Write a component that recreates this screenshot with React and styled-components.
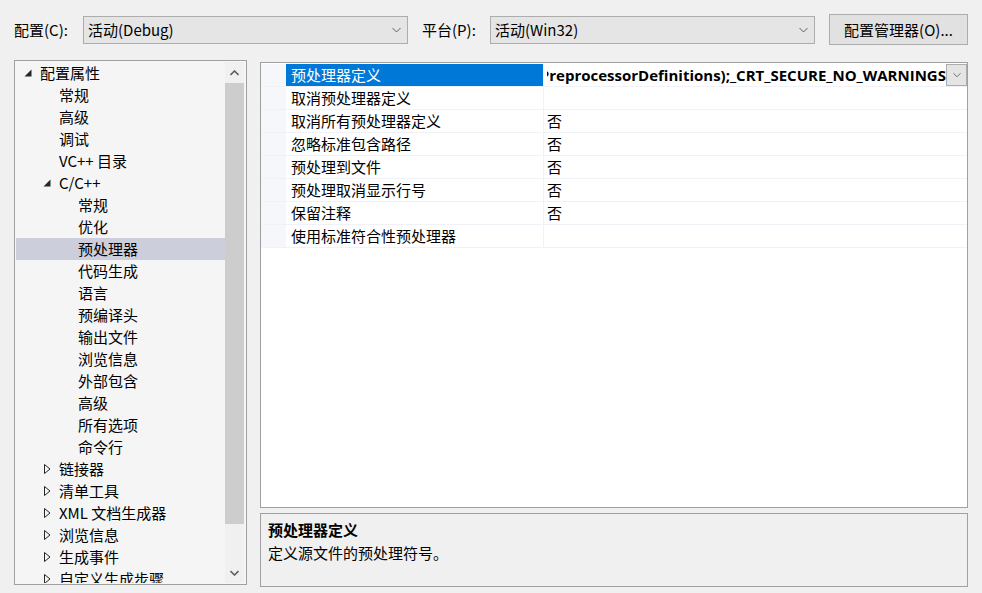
import React from 'react';
import styled, { createGlobalStyle } from 'styled-components';

const GlobalStyle = createGlobalStyle`
  html, body {
    margin: 0;
    padding: 0;
    background: #f0f0f0;
  }
  body {
    font-family: "Noto Sans CJK SC", "Noto Sans", sans-serif;
    font-size: 15px;
    color: #000;
  }
  * {
    box-sizing: border-box;
  }
`;

const Page = styled.div`
  width: 982px;
  height: 593px;
  padding: 14px 14px 0 14px;
  overflow: hidden;
  background: #f0f0f0;
`;

const TopBar = styled.div`
  display: flex;
  align-items: center;
  height: 31px;
`;

const Label = styled.div`
  width: ${(props) => props.width}px;
  margin-left: ${(props) => props.offset || 0}px;
  line-height: 20px;
  white-space: nowrap;
`;

const Combo = styled.div`
  display: flex;
  align-items: center;
  justify-content: space-between;
  width: 325px;
  height: 28px;
  padding: 0 6px 0 4px;
  background: #e5e5e5;
  border: 1px solid #adadad;
  line-height: 20px;
`;

const Button = styled.div`
  display: flex;
  align-items: center;
  justify-content: center;
  width: 139px;
  height: 31px;
  margin-left: 14px;
  background: #e1e1e1;
  border: 1px solid #adadad;
  line-height: 20px;
`;

const Main = styled.div`
  display: flex;
  margin-top: 15px;
  gap: 13px;
`;

const Tree = styled.div`
  display: flex;
  width: 233px;
  height: 525px;
  padding: 1px 2px 1px 1px;
  background: #f5f5f5;
  border: 1px solid #a0a0a0;
`;

const TreeList = styled.div`
  flex: 1;
  overflow: hidden;
`;

const TreeRow = styled.div`
  display: flex;
  align-items: center;
  height: 22px;
  padding-left: ${(props) => 8 + props.level * 19}px;
  background: ${(props) => (props.selected ? '#cccedb' : 'transparent')};
  white-space: nowrap;
  line-height: 20px;
`;

const Expander = styled.span`
  display: flex;
  align-items: center;
  width: 16px;
  height: 22px;
  flex-shrink: 0;
`;

const ScrollBar = styled.div`
  display: flex;
  flex-direction: column;
  width: 19px;
  background: #f0f0f0;
`;

const ScrollArrow = styled.div`
  display: flex;
  align-items: center;
  justify-content: center;
  height: 21px;
`;

const ScrollThumb = styled.div`
  height: 441px;
  background: #cdcdcd;
`;

const ScrollTrack = styled.div`
  flex: 1;
`;

const RightColumn = styled.div`
  display: flex;
  flex-direction: column;
  gap: 5px;
  width: 708px;
  margin-top: 2px;
`;

const Grid = styled.div`
  height: 446px;
  padding-top: 1px;
  background: #fff;
  border: 1px solid #a0a0a0;
`;

const GridRow = styled.div`
  display: flex;
  height: 23px;
  border-bottom: 1px solid #f0f2f8;
`;

const Gutter = styled.div`
  width: 25px;
  background: #f5f7fb;
`;

const NameCell = styled.div`
  display: flex;
  align-items: center;
  width: 258px;
  padding-left: 5px;
  border-right: 1px solid #f0f2f8;
  background: ${(props) => (props.selected ? '#0078d7' : '#fff')};
  color: ${(props) => (props.selected ? '#fff' : '#000')};
  white-space: nowrap;
  line-height: 20px;
`;

const ValueCell = styled.div`
  display: flex;
  align-items: center;
  flex: 1;
  min-width: 0;
  padding-left: 3px;
  line-height: 20px;
`;

const EditValue = styled.div`
  display: flex;
  justify-content: flex-end;
  flex: 1;
  min-width: 0;
  overflow: hidden;
  white-space: nowrap;
  font-family: "Open Sans", "Noto Sans", sans-serif;
  font-weight: 700;
  font-size: 15px;
`;

const DropButton = styled.div`
  display: flex;
  align-items: center;
  justify-content: center;
  width: 21px;
  height: 22px;
  background: #e5e5e5;
  border: 1px solid #acacac;
`;

const Description = styled.div`
  height: 74px;
  padding: 4px 7px;
  background: #f0f0f0;
  border: 1px solid #a0a0a0;
  line-height: 23px;
`;

const DescTitle = styled.div`
  font-weight: 700;
`;

const Chevron = ({ up, color = '#606060', width = 9, stroke = 1 }) => (
  <svg width={width} height="6" viewBox="0 0 9 6">
    <polyline
      points={up ? '0.5,5 4.5,1 8.5,5' : '0.5,1 4.5,5 8.5,1'}
      fill="none"
      stroke={color}
      strokeWidth={stroke}
    />
  </svg>
);

const Expanded = () => (
  <svg width="8" height="8" viewBox="0 0 8 8">
    <polygon points="7.5,0.5 7.5,7.5 0.5,7.5" fill="#262626" />
  </svg>
);

const Collapsed = () => (
  <svg width="8" height="10" viewBox="0 0 8 10" style={{ marginLeft: 1 }}>
    <polygon points="0.5,0.5 6,5 0.5,9.5" fill="none" stroke="#262626" />
  </svg>
);

const treeItems = [
  { label: '配置属性', level: 0, state: 'open' },
  { label: '常规', level: 1 },
  { label: '高级', level: 1 },
  { label: '调试', level: 1 },
  { label: 'VC++ 目录', level: 1 },
  { label: 'C/C++', level: 1, state: 'open' },
  { label: '常规', level: 2 },
  { label: '优化', level: 2 },
  { label: '预处理器', level: 2, selected: true },
  { label: '代码生成', level: 2 },
  { label: '语言', level: 2 },
  { label: '预编译头', level: 2 },
  { label: '输出文件', level: 2 },
  { label: '浏览信息', level: 2 },
  { label: '外部包含', level: 2 },
  { label: '高级', level: 2 },
  { label: '所有选项', level: 2 },
  { label: '命令行', level: 2 },
  { label: '链接器', level: 1, state: 'closed' },
  { label: '清单工具', level: 1, state: 'closed' },
  { label: 'XML 文档生成器', level: 1, state: 'closed' },
  { label: '浏览信息', level: 1, state: 'closed' },
  { label: '生成事件', level: 1, state: 'closed' },
  { label: '自定义生成步骤', level: 1, state: 'closed' },
];

const properties = [
  { name: '预处理器定义', value: '$(PreprocessorDefinitions);_CRT_SECURE_NO_WARNINGS', editing: true },
  { name: '取消预处理器定义', value: '' },
  { name: '取消所有预处理器定义', value: '否' },
  { name: '忽略标准包含路径', value: '否' },
  { name: '预处理到文件', value: '否' },
  { name: '预处理取消显示行号', value: '否' },
  { name: '保留注释', value: '否' },
  { name: '使用标准符合性预处理器', value: '' },
];

const App = () => (
  <Page>
    <GlobalStyle />
    <TopBar>
      <Label width={69}>配置(C):</Label>
      <Combo>
        <span>活动(Debug)</span>
        <Chevron />
      </Combo>
      <Label width={68} offset={14}>平台(P):</Label>
      <Combo>
        <span>活动(Win32)</span>
        <Chevron />
      </Combo>
      <Button>配置管理器(O)...</Button>
    </TopBar>
    <Main>
      <Tree>
        <TreeList>
          {treeItems.map((item, i) => (
            <TreeRow key={i} level={item.level} selected={item.selected}>
              <Expander>
                {item.state === 'open' && <Expanded />}
                {item.state === 'closed' && <Collapsed />}
              </Expander>
              {item.label}
            </TreeRow>
          ))}
        </TreeList>
        <ScrollBar>
          <ScrollArrow>
            <Chevron up stroke={1.6} />
          </ScrollArrow>
          <ScrollThumb />
          <ScrollTrack />
          <ScrollArrow>
            <Chevron stroke={1.6} />
          </ScrollArrow>
        </ScrollBar>
      </Tree>
      <RightColumn>
        <Grid>
          {properties.map((prop, i) => (
            <GridRow key={i}>
              <Gutter />
              <NameCell selected={prop.editing}>{prop.name}</NameCell>
              <ValueCell>
                {prop.editing ? (
                  <>
                    <EditValue>
                      <span>{prop.value}</span>
                    </EditValue>
                    <DropButton>
                      <Chevron width={8} />
                    </DropButton>
                  </>
                ) : (
                  prop.value
                )}
              </ValueCell>
            </GridRow>
          ))}
        </Grid>
        <Description>
          <DescTitle>预处理器定义</DescTitle>
          <div>定义源文件的预处理符号。</div>
        </Description>
      </RightColumn>
    </Main>
  </Page>
);

export default App;
